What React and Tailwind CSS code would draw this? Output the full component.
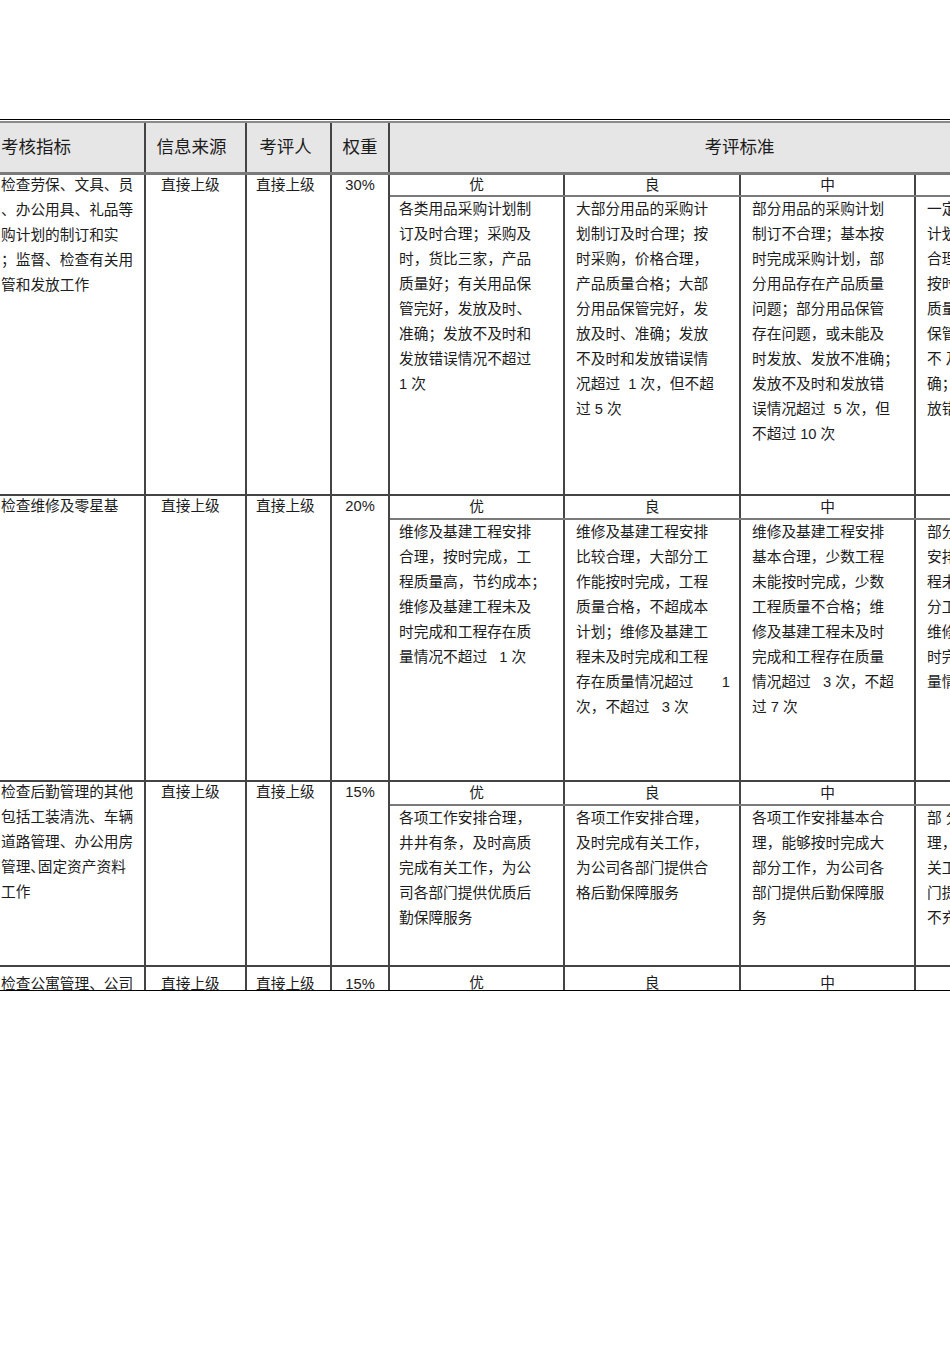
import React from "react";

const font = { fontFamily: '"Liberation Sans", "Noto Sans CJK SC", sans-serif' };

const rows = [
  {
    h: "h-[321px]",
    sub: "h-[22px]",
    off: "-mt-[2px]",
    name: [
      "检查劳保、文具、员",
      "、办公用具、礼品等",
      "购计划的制订和实",
      "；监督、检查有关用",
      "管和发放工作",
    ],
    weight: "30%",
    cells: [
      [
        "各类用品采购计划制",
        "订及时合理；采购及",
        "时，货比三家，产品",
        "质量好；有关用品保",
        "管完好，发放及时、",
        "准确；发放不及时和",
        "发放错误情况不超过",
        "1 次",
      ],
      [
        "大部分用品的采购计",
        "划制订及时合理；按",
        "时采购，价格合理，",
        "产品质量合格；大部",
        "分用品保管完好，发",
        "放及时、准确；发放",
        "不及时和发放错误情",
        "况超过  1 次，但不超",
        "过 5 次",
      ],
      [
        "部分用品的采购计划",
        "制订不合理；基本按",
        "时完成采购计划，部",
        "分用品存在产品质量",
        "问题；部分用品保管",
        "存在问题，或未能及",
        "时发放、发放不准确；",
        "发放不及时和发放错",
        "误情况超过  5 次，但",
        "不超过 10 次",
      ],
      [
        "一定数量用品的采购",
        "计划制订不及时、不",
        "合理；部分用品不能",
        "按时采购；部分产品",
        "质量不合格；部分用",
        "保管存在问题，发放",
        "不 及时、不准",
        "确；发放不及时和发",
        "放错误情况超过 10 次",
      ],
    ],
  },
  {
    h: "h-[286px]",
    sub: "h-[24px]",
    off: "-mt-[2px]",
    name: ["检查维修及零星基"],
    weight: "20%",
    cells: [
      [
        "维修及基建工程安排",
        "合理，按时完成，工",
        "程质量高，节约成本；",
        "维修及基建工程未及",
        "时完成和工程存在质",
        "量情况不超过   1 次",
      ],
      [
        "维修及基建工程安排",
        "比较合理，大部分工",
        "作能按时完成，工程",
        "质量合格，不超成本",
        "计划；维修及基建工",
        "程未及时完成和工程",
        "存在质量情况超过|1",
        "次，不超过   3 次",
      ],
      [
        "维修及基建工程安排",
        "基本合理，少数工程",
        "未能按时完成，少数",
        "工程质量不合格；维",
        "修及基建工程未及时",
        "完成和工程存在质量",
        "情况超过   3 次，不超",
        "过 7 次",
      ],
      [
        "部分维修及基建工程",
        "安排不合理，多数工",
        "程未能按时完成，大",
        "分工程质量不合格；",
        "维修及基建工程未及",
        "时完成和工程存在质",
        "量情况超过 7 次",
      ],
    ],
  },
  {
    h: "h-[185px]",
    sub: "h-[24px]",
    off: "-mt-[2px]",
    name: [
      "检查后勤管理的其他",
      "包括工装清洗、车辆",
      "道路管理、办公用房",
      "管理､固定资产资料",
      "工作",
    ],
    weight: "15%",
    cells: [
      [
        "各项工作安排合理，",
        "井井有条，及时高质",
        "完成有关工作，为公",
        "司各部门提供优质后",
        "勤保障服务",
      ],
      [
        "各项工作安排合理，",
        "及时完成有关工作，",
        "为公司各部门提供合",
        "格后勤保障服务",
      ],
      [
        "各项工作安排基本合",
        "理，能够按时完成大",
        "部分工作，为公司各",
        "部门提供后勤保障服",
        "务",
      ],
      [
        "部 分工作安排不合",
        "理，不能按时完成有",
        "关工作，为公司各部",
        "门提供后勤保障服务",
        "不充分",
      ],
    ],
  },
  {
    h: "h-[120px]",
    sub: "h-[34px]",
    off: "mt-[5px]",
    name: ["检查公寓管理、公司"],
    weight: "15%",
    cells: [[], [], [], []],
  },
];

const grades = ["优", "良", "中", "差"];
const subWidths = ["w-[175px]", "w-[176px]", "w-[175px]", "w-[175px]"];
const subPad = ["pl-[9px]", "pl-[11px]", "pl-[11px]", "pl-[11px]"];

function Line({ text }) {
  if (text.includes("|")) {
    const [a, b] = text.split("|");
    return (
      <div className="flex w-[154px] justify-between">
        <span>{a}</span>
        <span>{b}</span>
      </div>
    );
  }
  return <div className="whitespace-pre">{text}</div>;
}

function Row({ row }) {
  return (
    <div className={`flex ${row.h} border-b-2 border-[#444]`}>
      <div className="w-[146px] shrink-0 border-r-2 border-[#444] pl-[1px]">
        <div className={`${row.off} leading-[25px]`}>
          {row.name.map((l, i) => (
            <Line key={i} text={l} />
          ))}
        </div>
      </div>
      <div className="w-[101px] shrink-0 border-r-2 border-[#444] pl-[15px]">
        <div className={`${row.off} leading-[25px]`}>直接上级</div>
      </div>
      <div className="w-[85px] shrink-0 border-r-2 border-[#444] pl-[9px]">
        <div className={`${row.off} leading-[25px]`}>直接上级</div>
      </div>
      <div className="w-[58px] shrink-0 border-r-2 border-[#444] text-center">
        <div className={`${row.off} leading-[25px]`}>{row.weight}</div>
      </div>
      <div className="flex flex-col">
        <div className={`flex ${row.sub} border-b-2 border-[#7a7a7a]`}>
          {grades.map((g, i) => (
            <div
              key={g}
              className={`${subWidths[i]} shrink-0 border-r-2 border-[#444] flex items-center justify-center`}
            >
              {g}
            </div>
          ))}
        </div>
        <div className="flex flex-1">
          {row.cells.map((c, i) => (
            <div
              key={i}
              className={`${subWidths[i]} ${subPad[i]} shrink-0 border-r-2 border-[#444] leading-[25px] overflow-hidden`}
            >
              {c.map((l, j) => (
                <Line key={j} text={l} />
              ))}
            </div>
          ))}
        </div>
      </div>
    </div>
  );
}

export default function App() {
  return (
    <div className="w-[950px] h-[1345px] overflow-hidden bg-white text-[#1c1c1c]" style={font}>
      <div className="pt-[119px]">
        <div className="h-[872px] overflow-hidden border-b border-black">
          <div className="w-[1091px] border-t border-black text-[14.7px]">
            <div className="mt-px border-t-2 border-[#8a8a8a]">
              <div className="flex h-[52px] bg-[#e6e6e6] border-b-[3px] border-[#7a7a7a] text-[17.5px]">
                <div className="w-[146px] shrink-0 border-r-2 border-[#444] flex items-center pl-[1px]">
                  考核指标
                </div>
                <div className="w-[101px] shrink-0 border-r-2 border-[#444] flex items-center justify-center pr-[8px]">
                  信息来源
                </div>
                <div className="w-[85px] shrink-0 border-r-2 border-[#444] flex items-center justify-center pr-[6px]">
                  考评人
                </div>
                <div className="w-[58px] shrink-0 border-r-2 border-[#444] flex items-center justify-center">
                  权重
                </div>
                <div className="w-[701px] shrink-0 border-r-2 border-[#444] flex items-center justify-center">
                  考评标准
                </div>
              </div>
              {rows.map((r, i) => (
                <Row key={i} row={r} />
              ))}
            </div>
          </div>
        </div>
      </div>
    </div>
  );
}
